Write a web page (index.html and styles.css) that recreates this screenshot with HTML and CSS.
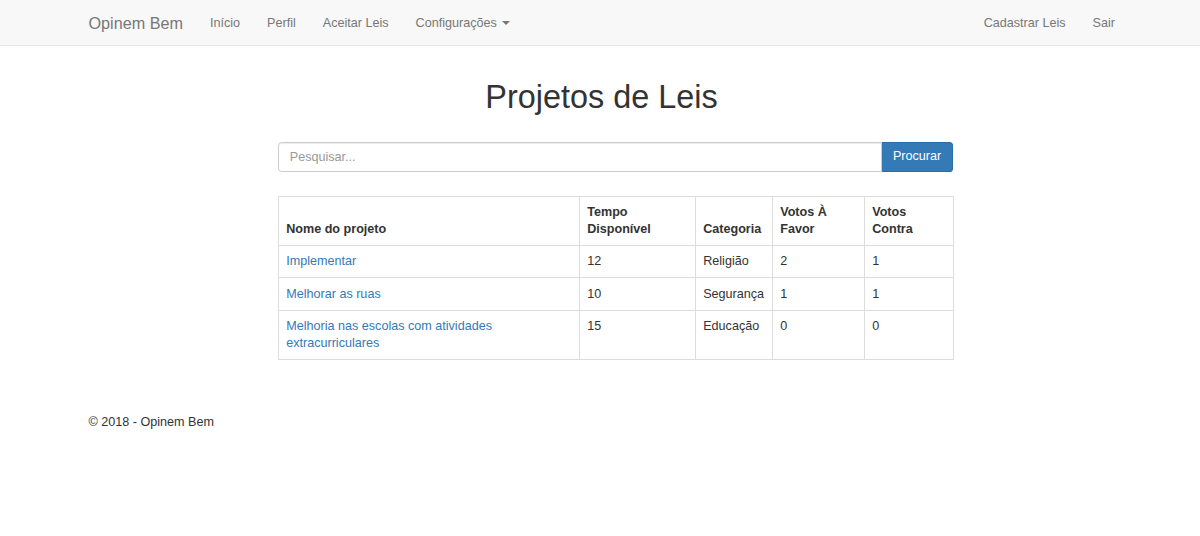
FILE: index.html
```html
<!DOCTYPE html>
<html lang="pt-BR">
<head>
<meta charset="utf-8">
<title>Projetos de Leis - Opinem Bem</title>
<link rel="stylesheet" href="styles.css">
</head>
<body>
<nav class="navbar">
  <div class="container nav-inner">
    <a class="brand" href="#">Opinem Bem</a>
    <ul class="nav">
      <li><a href="#">Início</a></li>
      <li><a href="#">Perfil</a></li>
      <li><a href="#">Aceitar Leis</a></li>
      <li><a href="#">Configurações <span class="caret"></span></a></li>
    </ul>
    <ul class="nav nav-right">
      <li><a href="#">Cadastrar Leis</a></li>
      <li><a href="#">Sair</a></li>
    </ul>
  </div>
</nav>
<main class="container body-content">
  <h1 class="title">Projetos de Leis</h1>
  <div class="panel">
    <form class="search">
      <input class="search-input" type="text" placeholder="Pesquisar...">
      <button class="btn-primary" type="button">Procurar</button>
    </form>
    <table class="table">
      <colgroup>
        <col class="c1"><col class="c2"><col class="c3"><col class="c4"><col class="c5">
      </colgroup>
      <thead>
        <tr>
          <th>Nome do projeto</th>
          <th>Tempo Disponível</th>
          <th>Categoria</th>
          <th>Votos À Favor</th>
          <th>Votos Contra</th>
        </tr>
      </thead>
      <tbody>
        <tr>
          <td><a href="#">Implementar</a></td>
          <td>12</td>
          <td>Religião</td>
          <td>2</td>
          <td>1</td>
        </tr>
        <tr>
          <td><a href="#">Melhorar as ruas</a></td>
          <td>10</td>
          <td>Segurança</td>
          <td>1</td>
          <td>1</td>
        </tr>
        <tr>
          <td><a href="#">Melhoria nas escolas com atividades extracurriculares</a></td>
          <td>15</td>
          <td>Educação</td>
          <td>0</td>
          <td>0</td>
        </tr>
      </tbody>
    </table>
  </div>
  <footer class="footer">
    <p>© 2018 - Opinem Bem</p>
  </footer>
</main>
</body>
</html>
```
FILE: styles.css
```css
* { box-sizing: border-box; }
html, body { margin: 0; padding: 0; }
body {
  font-family: "Liberation Sans", Arial, Helvetica, sans-serif;
  font-size: 12.6px;
  line-height: 1.42857;
  color: #333;
  background: #fff;
}
a { color: #337ab7; text-decoration: none; }

.container {
  width: 1053px;
  margin-left: 75px;
  padding: 0 13.5px;
}

/* navbar */
.navbar {
  background: #f8f8f8;
  border-bottom: 1px solid #e7e7e7;
  height: 46px;
}
.nav-inner {
  display: flex;
  align-items: stretch;
  height: 45px;
}
.brand {
  display: block;
  margin-left: -13.5px;
  padding: 13.5px;
  font-size: 16.2px;
  line-height: 18px;
  height: 45px;
  color: #777;
}
.nav {
  display: flex;
  list-style: none;
  margin: 0;
  padding: 0;
}
.nav a {
  display: block;
  padding: 13.5px;
  line-height: 18px;
  color: #777;
}
.nav-right { margin-left: auto; margin-right: -14px; }
.caret {
  display: inline-block;
  width: 0;
  height: 0;
  margin-left: 1.8px;
  vertical-align: middle;
  border-top: 4px solid #777;
  border-left: 4px solid transparent;
  border-right: 4px solid transparent;
}

/* content */
.title {
  margin: 34px 0 0;
  text-align: center;
  font-size: 32.4px;
  font-weight: 500;
  line-height: 1.1;
  color: #333;
}
.panel {
  width: 675px;
  margin-left: 189.5px;
  padding-top: 26px;
}
.search {
  display: flex;
  margin: 0;
}
.search-input {
  flex: 1;
  height: 30.6px;
  padding: 5.4px 10.8px;
  font: inherit;
  font-size: 12.6px;
  color: #555;
  border: 1px solid #ccc;
  border-radius: 3.6px 0 0 3.6px;
  box-shadow: inset 0 1px 1px rgba(0,0,0,.075);
  outline: none;
}
.search-input::placeholder { color: #999; }
.btn-primary {
  height: 30.6px;
  padding: 5.4px 10.8px;
  font: inherit;
  font-size: 12.6px;
  color: #fff;
  background: #337ab7;
  border: 1px solid #2e6da4;
  border-left: 0;
  border-radius: 0 3.6px 3.6px 0;
  cursor: pointer;
}

.table {
  width: 675px;
  margin-top: 24px;
  margin-bottom: 18px;
  border-collapse: collapse;
  table-layout: fixed;
  border: 1px solid #ddd;
}
.c1 { width: 301px; }
.c2 { width: 116px; }
.c3 { width: 77px; }
.c4 { width: 92px; }
.c5 { width: 89px; }
.table th, .table td {
  padding: 7.2px;
  line-height: 16.8px;
  border: 1px solid #ddd;
  text-align: left;
}
.table th {
  vertical-align: bottom;
  font-weight: bold;
}
.table td { vertical-align: top; }

.footer { padding-top: 36px; }
.footer p { margin: 0 0 9px; }
```
